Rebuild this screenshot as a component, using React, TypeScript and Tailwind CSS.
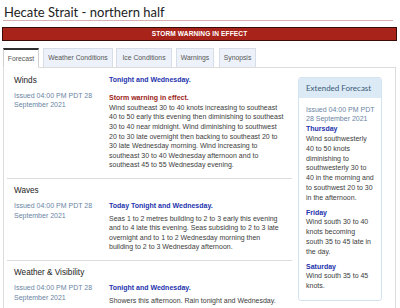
import React from 'react';

type Section = {
  name: string;
  title: string;
  warning?: string;
  lines: string[];
  titleOnTop?: boolean;
};

const sections: Section[] = [
  {
    name: 'Winds',
    title: 'Tonight and Wednesday.',
    warning: 'Storm warning in effect.',
    titleOnTop: true,
    lines: [
      'Wind southeast 30 to 40 knots increasing to southeast',
      '40 to 50 early this evening then diminishing to southeast',
      '30 to 40 near midnight. Wind diminishing to southwest',
      '20 to 30 late overnight then backing to southeast 20 to',
      '30 late Wednesday morning. Wind increasing to',
      'southeast 30 to 40 Wednesday afternoon and to',
      'southeast 45 to 55 Wednesday evening.',
    ],
  },
  {
    name: 'Waves',
    title: 'Today Tonight and Wednesday.',
    lines: [
      'Seas 1 to 2 metres building to 2 to 3 early this evening',
      'and to 4 late this evening. Seas subsiding to 2 to 3 late',
      'overnight and to 1 to 2 Wednesday morning then',
      'building to 2 to 3 Wednesday afternoon.',
    ],
  },
  {
    name: 'Weather & Visibility',
    title: 'Tonight and Wednesday.',
    lines: ['Showers this afternoon. Rain tonight and Wednesday.'],
  },
];

const extended = [
  { day: 'Thursday', lines: ['Wind southwesterly', '40 to 50 knots', 'diminishing to', 'southwesterly 30 to', '40 in the morning and', 'to southwest 20 to 30', 'in the afternoon.'] },
  { day: 'Friday', lines: ['Wind south 30 to 40', 'knots becoming', 'south 35 to 45 late in', 'the day.'] },
  { day: 'Saturday', lines: ['Wind south 35 to 45', 'knots.'] },
];

const tabs = [
  { label: 'Forecast', w: 'w-[36px]', ml: 'ml-0' },
  { label: 'Weather Conditions', w: 'w-[70px]', ml: 'ml-[4px]' },
  { label: 'Ice Conditions', w: 'w-[56px]', ml: 'ml-[3px]' },
  { label: 'Warnings', w: 'w-[38px]', ml: 'ml-[4px]' },
  { label: 'Synopsis', w: 'w-[37px]', ml: 'ml-[5px]' },
];

const Issued = ({ className = '' }: { className?: string }) => (
  <div className={`text-[#6a84a4] text-[7px] leading-[9.7px] ${className}`}>
    Issued 04:00 PM PDT 28
    <br />
    September 2021
  </div>
);

const SectionRow = ({ s, last }: { s: Section; last: boolean }) => (
  <div className={`flex pt-[6.5px] ${last ? '' : 'border-b border-[#dcdcdc] pb-[7.5px]'}`}>
    <div className="w-[102px] pl-[7px] shrink-0">
      <div className="text-[8.2px] leading-[11px] text-[#222]">{s.name}</div>
      <Issued className="mt-[5px]" />
    </div>
    <div className={`w-[183px] text-[7px] leading-[9.6px] whitespace-nowrap ${s.titleOnTop ? 'mt-[0.7px]' : 'mt-[15.7px]'}`}>
      <div className="font-bold text-[#2433ad]">{s.title}</div>
      <div className={s.warning ? 'mt-[8.4px]' : 'mt-[3.4px]'}>
        {s.warning && <div className="font-bold text-[#9b1d16]">{s.warning}</div>}
        {s.lines.map((l, i) => (
          <div key={i} className="text-[#3c3c3c]">{l}</div>
        ))}
      </div>
    </div>
  </div>
);

export default function App() {
  return (
    <div className="w-[400px] h-[308px] overflow-hidden bg-white font-['Liberation_Sans',Arial,sans-serif]">
      <div className="pl-[3px]">
        <h1 className="w-[390px] pt-[4.5px] pl-[1px] font-['Lato',sans-serif] text-[13px] leading-[15.6px] text-[#222] border-b border-[#d8b2b2]">
          Hecate Strait - northern half
        </h1>
        <div className="mt-[6px] -ml-[1px] w-[395px] h-[14px] border border-[#3a0c09] bg-[#a8231a] flex items-center justify-center text-white font-bold text-[6.6px] tracking-[0.1px]">
          STORM WARNING IN EFFECT
        </div>
        <div className="mt-[7px] flex items-end">
          {tabs.map((t, i) =>
            i === 0 ? (
              <div
                key={t.label}
                className={`${t.w} ${t.ml} h-[20px] -mb-px relative bg-white border border-[#d0d0d0] border-t-2 border-t-[#2f2f2f] border-b-white flex items-center justify-center text-[6.8px] text-[#555]`}
              >
                {t.label}
              </div>
            ) : (
              <div
                key={t.label}
                className={`${t.w} ${t.ml} h-[19px] bg-[#edf2fa] border border-[#d8dee8] border-b-0 flex items-center justify-center text-[6.8px] text-[#555]`}
              >
                {t.label}
              </div>
            ),
          )}
        </div>
        <div className="w-[393px] h-[260px] border border-[#dcdcdc] border-b-0 flex pl-[3px]">
          <div className="w-[285px] shrink-0">
            {sections.map((s, i) => (
              <SectionRow key={s.name} s={s} last={i === sections.length - 1} />
            ))}
          </div>
          <div className="ml-[6px] mt-[8.5px] w-[84px] h-[224px] border border-[#d5e3ef] rounded-[3px] overflow-hidden">
            <div className="h-[20px] bg-[#dceaf5] pl-[7px] flex items-center font-['Lato',sans-serif] text-[8px] text-[#3b5a78]">
              Extended Forecast
            </div>
            <div className="pl-[7px] pt-[7px] text-[7px] leading-[9.8px] whitespace-nowrap">
              <div className="text-[#6a84a4]">
                Issued 04:00 PM PDT
                <br />
                28 September 2021
              </div>
              {extended.map((d, i) => (
                <div key={d.day} className={i === 0 ? '' : 'mt-[5px]'}>
                  <div className="font-bold text-[#2433ad]">{d.day}</div>
                  {d.lines.map((l, j) => (
                    <div key={j} className="text-[#3c3c3c]">{l}</div>
                  ))}
                </div>
              ))}
            </div>
          </div>
        </div>
      </div>
    </div>
  );
}
